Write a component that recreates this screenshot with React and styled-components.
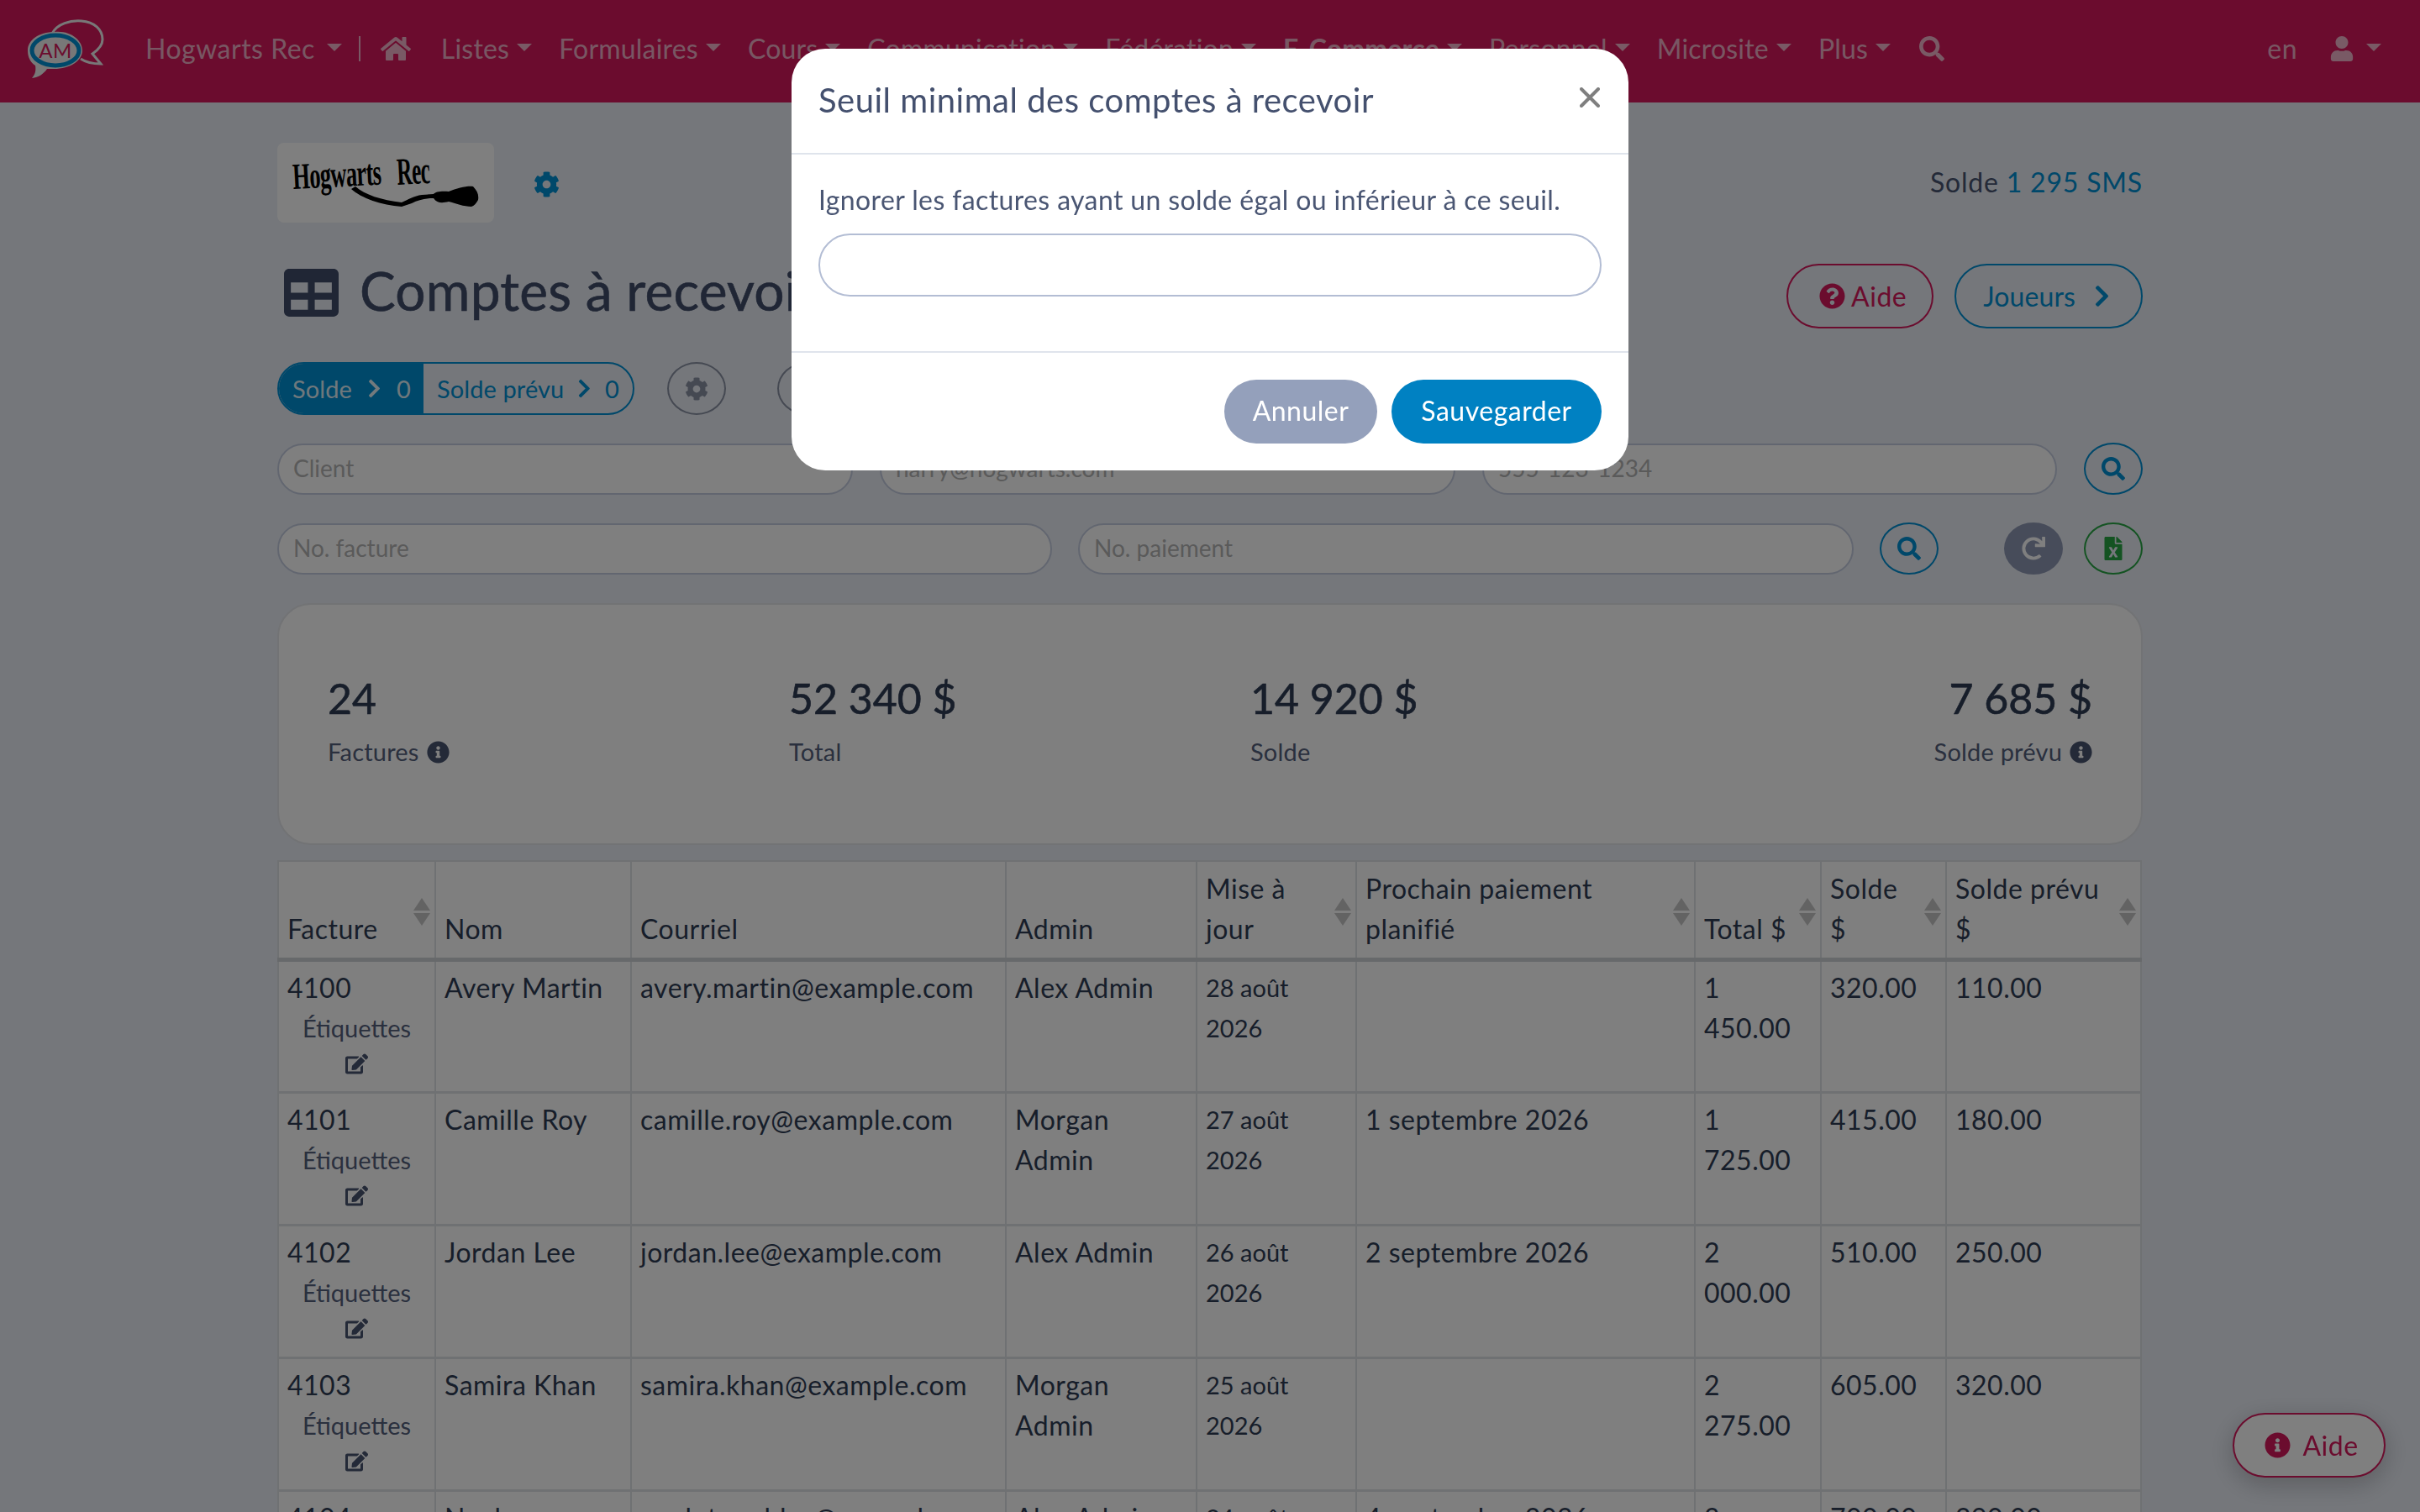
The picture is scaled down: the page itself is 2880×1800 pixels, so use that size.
import React from 'react'
import styled, { createGlobalStyle } from 'styled-components'
import {
  FaHome, FaSearch, FaUser, FaCog, FaTable, FaChevronRight, FaQuestionCircle,
  FaInfoCircle, FaEdit, FaRedo, FaFileExcel,
} from 'react-icons/fa'

const GlobalStyle = createGlobalStyle`
  html, body {
    margin: 0;
    height: 100%;
    overflow: hidden;
    background: #eaeef6;
    color: #485470;
    font-family: "Lato", "Liberation Sans", sans-serif;
    font-size: 32px;
    line-height: 48px;
    letter-spacing: 0.5px;
  }
  * { box-sizing: border-box; }
`

const NavBar = styled.nav`
  height: 122px;
  background: #d6185c;
  color: rgba(255, 255, 255, 0.68);
  display: flex;
  align-items: center;
  padding: 0 46px 6px 32px;
`

const Brand = styled.div`
  width: 141px;
  flex: none;
  display: flex;
`

const NavGroup = styled.div`
  display: flex;
  align-items: center;
  gap: 32px;
  letter-spacing: 0.2px;
  & > svg:first-child { margin-right: 4px; }
  & > svg:last-child { margin-left: 2px; }
`

const NavLink = styled.a`
  display: flex;
  align-items: center;
  font-weight: ${p => (p.$bold ? 700 : 400)};
  white-space: nowrap;
`

const Caret = styled.span`
  width: 0;
  height: 0;
  margin-left: ${p => p.$gap || 9}px;
  margin-bottom: 4px;
  border-top: 9px solid currentColor;
  border-left: 9px solid transparent;
  border-right: 9px solid transparent;
`

const Pipe = styled.span`
  width: 2px;
  height: 30px;
  background: currentColor;
  margin: 0 24px 0 20px;
`

const NavRight = styled.div`
  margin-left: auto;
  display: flex;
  align-items: center;
  gap: 38px;
`

const Main = styled.main`
  width: 2220px;
  margin-left: 330px;
`

const TopRow = styled.div`
  height: 95px;
  margin-top: 48px;
  display: flex;
  align-items: center;
  justify-content: space-between;
`

const LogoGroup = styled.div`
  display: flex;
  align-items: center;
  gap: 47px;
  color: #0090d4;
  & > svg { margin-top: 4px; }
`

const LogoBox = styled.div`
  width: 258px;
  height: 95px;
  border-radius: 8px;
  background: #ffffff;
`

const Balance = styled.div`
  margin-top: -2px;
  letter-spacing: 0.8px;
  & b { font-weight: 400; color: #0090d4; }
`

const TitleRow = styled.div`
  display: flex;
  align-items: center;
  justify-content: space-between;
  margin-top: 49px;
  height: 77px;
`

const PageTitle = styled.h1`
  margin: 0;
  display: flex;
  align-items: center;
  gap: 25px;
  padding: 0 0 14px 8px;
  font-size: 64px;
  font-weight: 400;
  letter-spacing: 0.2px;
  -webkit-text-stroke: 0.6px currentColor;
  color: #414d6a;
  white-space: nowrap;
  & > svg { margin-top: 6px; }
`

const TitleActions = styled.div`
  display: flex;
  gap: 25px;
`

const OutlineButton = styled.button`
  height: 77px;
  padding: ${p => p.$padding};
  display: flex;
  align-items: center;
  gap: ${p => p.$gap}px;
  background: transparent;
  border: 2px solid ${p => p.$color};
  border-radius: 39px;
  color: ${p => p.$color};
  font: inherit;
  letter-spacing: ${p => p.$spacing || 0.5}px;
`

const TabRow = styled.div`
  display: flex;
  align-items: center;
  margin-top: 40px;
  gap: 39px;
`

const ToggleGroup = styled.div`
  display: flex;
  height: 63px;
  border: 2px solid #0090d4;
  border-radius: 32px;
  overflow: hidden;
  font-size: 29px;
  letter-spacing: 0.1px;
  color: #0090d4;
`

const Toggle = styled.div`
  display: flex;
  align-items: center;
  gap: 15px;
  padding: 0 ${p => (p.$active ? 15 : 16)}px 0 16px;
  background: ${p => (p.$active ? '#0090d4' : 'transparent')};
  color: ${p => (p.$active ? 'rgba(255,255,255,0.9)' : '#0090d4')};
  width: ${p => p.$width}px;
  white-space: nowrap;
`

const RoundButton = styled.button`
  width: 70px;
  height: ${p => p.$h || 62}px;
  flex: none;
  padding: 0;
  border: 2px solid ${p => p.$color};
  border-radius: 50%;
  background: ${p => (p.$solid ? p.$color : 'transparent')};
  color: ${p => (p.$solid ? '#ffffff' : p.$color)};
  display: flex;
  align-items: center;
  justify-content: center;
  font-size: 28px;
`

const Ghost = styled(RoundButton)`
  margin-left: 22px;
`

const SearchRow = styled.div`
  display: grid;
  grid-template-columns: ${p => p.$cols};
  column-gap: ${p => p.$gap}px;
  margin-top: ${p => p.$top}px;
  align-items: center;
`

const FilterInput = styled.input`
  height: 61px;
  width: 100%;
  padding: 0 17px 3px;
  border: 2px solid #c5cde0;
  border-radius: 31px;
  background: #ffffff;
  font: inherit;
  font-size: 28px;
  letter-spacing: 0;
  color: #485470;
  &::placeholder { color: #b4b4b4; opacity: 1; }
`

const ActionPair = styled.div`
  display: flex;
  justify-self: end;
  gap: 25px;
`

const StatsCard = styled.section`
  margin-top: 34px;
  height: 288px;
  padding: 83px 58px 0;
  background: #ffffff;
  border: 2px solid #e4e6ea;
  border-radius: 40px;
  display: grid;
  grid-template-columns: 549px 549px 549px 1fr;
`

const Stat = styled.div`
  text-align: ${p => (p.$right ? 'right' : 'left')};
`

const StatValue = styled.div`
  font-size: 50px;
  line-height: 56px;
  color: #2f3c55;
  letter-spacing: 0;
  -webkit-text-stroke: 0.6px currentColor;
`

const StatLabel = styled.div`
  margin-top: 12px;
  font-size: 29px;
  letter-spacing: 0.2px;
  color: #54607c;
  display: flex;
  align-items: center;
  justify-content: ${p => (p.$right ? 'flex-end' : 'flex-start')};
  gap: 9px;
  & svg { font-size: 27px; color: #485470; }
`

const Table = styled.table`
  margin-top: 18px;
  width: 2219px;
  table-layout: fixed;
  border-collapse: collapse;
  background: #ffffff;
  color: #2f3c55;
`

const HeadCell = styled.th`
  position: relative;
  height: 117px;
  padding: 8px 40px 10px 10px;
  border: 2px solid #dfe2e7;
  border-bottom: 5px solid #cfd2d7;
  vertical-align: bottom;
  text-align: left;
  font-weight: 400;
  white-space: ${p => (p.$nowrap ? 'nowrap' : 'normal')};
`

const SortArrows = styled.span`
  position: absolute;
  right: 5px;
  top: 43px;
  display: flex;
  flex-direction: column;
  gap: 3px;
  &::before, &::after {
    content: '';
    border-left: 10px solid transparent;
    border-right: 10px solid transparent;
  }
  &::before { border-bottom: 15px solid #c6c6c6; }
  &::after { border-top: 15px solid #c6c6c6; }
`

const Cell = styled.td`
  height: 158px;
  padding: 7px 10px;
  border: 2px solid #dfe2e7;
  border-bottom-width: 3px;
  vertical-align: top;
  font-size: ${p => (p.$small ? 29 : 32)}px;
  letter-spacing: ${p => (p.$small ? 0 : 0.5)}px;
`

const TagBlock = styled.div`
  margin-top: 2px;
  text-align: center;
  font-size: 29px;
  line-height: 44px;
  letter-spacing: 0;
  color: #54607c;
  & svg { display: block; margin: 7px auto 0; font-size: 27px; color: #485470; }
`

const FloatingHelp = styled.button`
  position: fixed;
  left: 2657px;
  top: 1682px;
  width: 182px;
  height: 77px;
  padding: 0 0 0 6px;
  background: #ffffff;
  border: 2px solid #d6185c;
  border-radius: 39px;
  box-shadow: 0 8px 30px rgba(0, 0, 0, 0.22);
  color: #d6185c;
  font: inherit;
  letter-spacing: inherit;
  display: flex;
  align-items: center;
  justify-content: center;
  gap: 14px;
`

const Backdrop = styled.div`
  position: fixed;
  inset: 0;
  background: rgba(0, 0, 0, 0.5);
`

const Modal = styled.div`
  position: fixed;
  left: 942px;
  top: 58px;
  width: 996px;
  height: 502px;
  background: #ffffff;
  border-radius: 40px;
  color: #4a5673;
`

const ModalHeader = styled.div`
  height: 126px;
  padding: 31px 32px;
  border-bottom: 2px solid #dfe4ec;
  display: flex;
  justify-content: space-between;
  align-items: flex-start;
`

const ModalTitle = styled.h5`
  margin: 0;
  font-size: 40px;
  line-height: 60px;
  font-weight: 400;
  color: #44506e;
`

const CloseX = styled.svg`
  width: 24px;
  height: 24px;
  margin: 15px 2px 0 0;
`

const ModalBody = styled.div`
  height: 236px;
  padding: 30px 32px 0;
  border-bottom: 2px solid #dfe4ec;
`

const ModalText = styled.p`
  margin: 0 0 16px;
  letter-spacing: 0.38px;
`

const ModalInput = styled.input`
  display: block;
  width: 100%;
  height: 75px;
  border: 2px solid #b3bdd4;
  border-radius: 38px;
  background: #ffffff;
`

const ModalFooter = styled.div`
  padding: 32px;
  display: flex;
  justify-content: flex-end;
  gap: 17px;
`

const ModalButton = styled.button`
  height: 76px;
  width: ${p => p.$width}px;
  padding: 0 0 2px;
  border: none;
  border-radius: 38px;
  background: ${p => p.$bg};
  color: #ffffff;
  font: inherit;
  letter-spacing: inherit;
`

const navItems = ['Listes', 'Formulaires', 'Cours', 'Communication', 'Fédération', 'E-Commerce', 'Personnel', 'Microsite', 'Plus']

const widths = [187, 233, 446, 227, 190, 403, 150, 149, 232]

const headers = [
  { label: 'Facture', sort: true },
  { label: 'Nom' },
  { label: 'Courriel' },
  { label: 'Admin' },
  { label: 'Mise à jour', sort: true },
  { label: 'Prochain paiement planifié', sort: true },
  { label: 'Total $', sort: true, nowrap: true },
  { label: 'Solde $', sort: true },
  { label: 'Solde prévu $', sort: true },
]

const rows = [
  ['4100', 'Avery Martin', 'avery.martin@example.com', 'Alex Admin', '28 août 2026', '', '1 450.00', '320.00', '110.00'],
  ['4101', 'Camille Roy', 'camille.roy@example.com', 'Morgan Admin', '27 août 2026', '1 septembre 2026', '1 725.00', '415.00', '180.00'],
  ['4102', 'Jordan Lee', 'jordan.lee@example.com', 'Alex Admin', '26 août 2026', '2 septembre 2026', '2 000.00', '510.00', '250.00'],
  ['4103', 'Samira Khan', 'samira.khan@example.com', 'Morgan Admin', '25 août 2026', '', '2 275.00', '605.00', '320.00'],
  ['4104', 'Noah Tremblay', 'noah.tremblay@example.com', 'Alex Admin', '24 août 2026', '4 septembre 2026', '3 100.00', '700.00', '290.00'],
]

const AppLogo = () => (
  <svg width="92" height="72" viewBox="0 0 92 72">
    <path d="M30 18 C36 6 52 2 65 3 C80 4 90 13 90 25 C90 33 84 38 78 42 L88 54 C78 54 70 52 64 48" fill="none" stroke="#f0f0f0" strokeWidth="3" />
    <path d="M33 16 C52 14 66 26 66 38 C66 50 52 60 32 60 L24 60 C20 66 14 70 6 71 C10 66 11 62 10 56 C4 52 1 46 1 38 C1 26 14 16 33 16 Z" fill="#f0f0f0" />
    <ellipse cx="34" cy="38" rx="28" ry="18" fill="none" stroke="#0090d4" strokeWidth="5" />
    <text x="34" y="47" textAnchor="middle" fontFamily="Lato, sans-serif" fontSize="24" fill="#d6185c">AM</text>
  </svg>
)

const ClubLogo = () => (
  <svg width="258" height="95" viewBox="0 0 258 95">
    <g transform="translate(19 55) rotate(-3) scale(0.6 1)">
      <text fontFamily="Liberation Serif, serif" fontWeight="700" fontSize="44" fill="#000" letterSpacing="-1">Hogwarts</text>
    </g>
    <g transform="translate(143 50) rotate(-3) scale(0.55 1)">
      <text fontFamily="Liberation Serif, serif" fontWeight="700" fontSize="46" fill="#000" letterSpacing="-1">Rec</text>
    </g>
    <path d="M88 55 L93 52 C104 62 124 68 148 71 C155 68 163 63 172 62 L186 61 C188 58 196 57 204 58 C214 54 226 51 233 52 C238 57 240 62 239 68 C237 72 234 75 231 76 C222 76 212 72 204 70 C196 72 190 72 186 66 C176 66 168 68 160 72 L148 76 C124 74 100 66 88 55 Z" fill="#000" />
  </svg>
)

const App = () => (
  <>
    <GlobalStyle />
    <NavBar>
      <Brand><AppLogo /></Brand>
      <NavLink>Hogwarts Rec<Caret $gap={14} /></NavLink>
      <Pipe />
      <NavGroup>
        <FaHome size={36} />
        {navItems.map(item => (
          <NavLink key={item} $bold={item === 'E-Commerce'}>{item}<Caret /></NavLink>
        ))}
        <FaSearch size={30} />
      </NavGroup>
      <NavRight>
        <span>en</span>
        <NavLink><FaUser size={30} /><Caret $gap={14} /></NavLink>
      </NavRight>
    </NavBar>

    <Main>
      <TopRow>
        <LogoGroup>
          <LogoBox><ClubLogo /></LogoBox>
          <FaCog size={31} />
        </LogoGroup>
        <Balance>Solde <b>1 295 SMS</b></Balance>
      </TopRow>

      <TitleRow>
        <PageTitle><FaTable size={65} />Comptes à recevoir</PageTitle>
        <TitleActions>
          <OutlineButton $color="#d6185c" $padding="0 30px 0 37px" $gap={7}><FaQuestionCircle size={31} />Aide</OutlineButton>
          <OutlineButton $color="#0090d4" $padding="0 32px 0 32px" $gap={17} $spacing={0.1}>Joueurs<FaChevronRight size={29} /></OutlineButton>
        </TitleActions>
      </TitleRow>

      <TabRow>
        <ToggleGroup>
          <Toggle $active $width={172}>Solde<FaChevronRight size={25} />0</Toggle>
          <Toggle $width={249}>Solde prévu<FaChevronRight size={25} />0</Toggle>
        </ToggleGroup>
        <RoundButton $color="#8b92a5" $h={63}><FaCog size={28} color="#8b92a5" /></RoundButton>
        <Ghost $color="#8b92a5" $h={63} />
      </TabRow>

      <SearchRow $cols="685px 685px 684px 1fr" $gap={32} $top={33}>
        <FilterInput placeholder="Client" />
        <FilterInput placeholder="harry@hogwarts.com" />
        <FilterInput placeholder="555-123-1234" />
        <RoundButton $color="#0090d4"><FaSearch /></RoundButton>
      </SearchRow>

      <SearchRow $cols="922px 923px 70px 1fr" $gap={31} $top={33}>
        <FilterInput placeholder="No. facture" />
        <FilterInput placeholder="No. paiement" />
        <RoundButton $color="#0090d4"><FaSearch /></RoundButton>
        <ActionPair>
          <RoundButton $color="#8f99b5" $solid><FaRedo /></RoundButton>
          <RoundButton $color="#28a745"><FaFileExcel /></RoundButton>
        </ActionPair>
      </SearchRow>

      <StatsCard>
        <Stat>
          <StatValue>24</StatValue>
          <StatLabel>Factures <FaInfoCircle /></StatLabel>
        </Stat>
        <Stat>
          <StatValue>52 340 $</StatValue>
          <StatLabel>Total</StatLabel>
        </Stat>
        <Stat>
          <StatValue>14 920 $</StatValue>
          <StatLabel>Solde</StatLabel>
        </Stat>
        <Stat $right>
          <StatValue>7 685 $</StatValue>
          <StatLabel $right>Solde prévu <FaInfoCircle /></StatLabel>
        </Stat>
      </StatsCard>

      <Table>
        <colgroup>
          {widths.map((w, i) => <col key={i} width={w} />)}
        </colgroup>
        <thead>
          <tr>
            {headers.map(h => (
              <HeadCell key={h.label} $nowrap={h.nowrap}>{h.label}{h.sort && <SortArrows />}</HeadCell>
            ))}
          </tr>
        </thead>
        <tbody>
          {rows.map(r => (
            <tr key={r[0]}>
              <Cell>
                {r[0]}
                <TagBlock>Étiquettes<FaEdit /></TagBlock>
              </Cell>
              <Cell>{r[1]}</Cell>
              <Cell>{r[2]}</Cell>
              <Cell>{r[3]}</Cell>
              <Cell $small>{r[4]}</Cell>
              <Cell>{r[5]}</Cell>
              <Cell>{r[6]}</Cell>
              <Cell>{r[7]}</Cell>
              <Cell>{r[8]}</Cell>
            </tr>
          ))}
        </tbody>
      </Table>
    </Main>

    <FloatingHelp><FaInfoCircle size={31} />Aide</FloatingHelp>

    <Backdrop />
    <Modal>
      <ModalHeader>
        <ModalTitle>Seuil minimal des comptes à recevoir</ModalTitle>
        <CloseX viewBox="0 0 24 24">
          <path d="M2 2 L22 22 M22 2 L2 22" stroke="#7f7f7f" strokeWidth="4" strokeLinecap="round" />
        </CloseX>
      </ModalHeader>
      <ModalBody>
        <ModalText>Ignorer les factures ayant un solde égal ou inférieur à ce seuil.</ModalText>
        <ModalInput />
      </ModalBody>
      <ModalFooter>
        <ModalButton $bg="#94a0bb" $width={182}>Annuler</ModalButton>
        <ModalButton $bg="#0081c2" $width={250}>Sauvegarder</ModalButton>
      </ModalFooter>
    </Modal>
  </>
)

export default App
